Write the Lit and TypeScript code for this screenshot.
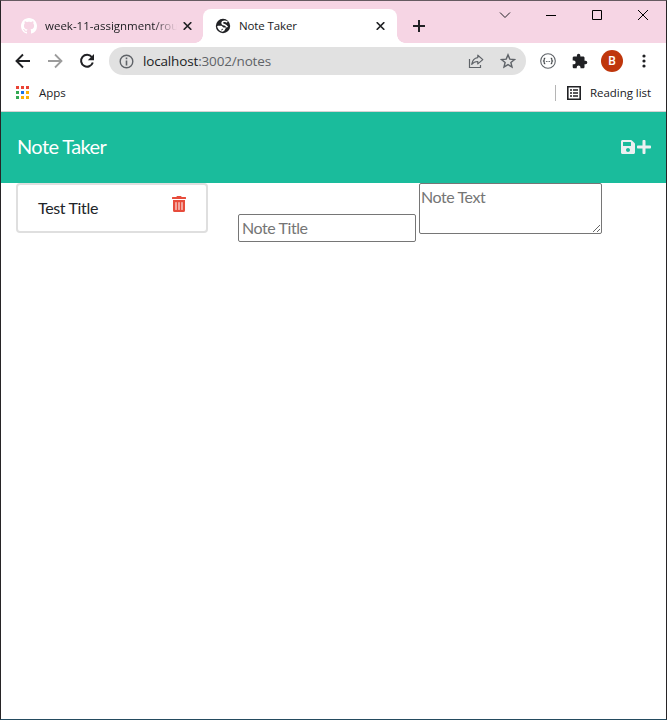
import { LitElement, html, css, svg } from "lit";
import { customElement } from "lit/decorators.js";

const GITHUB =
  "M8 0C3.58 0 0 3.58 0 8c0 3.54 2.29 6.53 5.47 7.59.4.07.55-.17.55-.38 0-.19-.01-.82-.01-1.49-2.01.37-2.53-.49-2.69-.94-.09-.23-.48-.94-.82-1.13-.28-.15-.68-.52-.01-.53.63-.01 1.08.58 1.23.82.72 1.21 1.87.87 2.33.66.07-.52.28-.87.51-1.07-1.78-.2-3.64-.89-3.64-3.95 0-.87.31-1.59.82-2.15-.08-.2-.36-1.02.08-2.12 0 0 .67-.21 2.2.82.64-.18 1.32-.27 2-.27s1.36.09 2 .27c1.53-1.04 2.2-.82 2.2-.82.44 1.1.16 1.92.08 2.12.51.56.82 1.27.82 2.15 0 3.07-1.87 3.75-3.65 3.95.29.25.54.73.54 1.48 0 1.07-.01 1.93-.01 2.2 0 .21.15.46.55.38A8.01 8.01 0 0 0 16 8c0-4.42-3.58-8-8-8z";
const PUZZLE =
  "M20.5 11H19V7c0-1.100-.9-2-2-2h-4V3.500a2.500 2.500 0 0 0-5 0V5H4c-1.100 0-2 .9-2 2v3.800h1.500a2.700 2.700 0 0 1 0 5.400H2V20c0 1.100.9 2 2 2h3.800v-1.500a2.700 2.700 0 0 1 5.400 0V22H17c1.100 0 2-.9 2-2v-4h1.500a2.500 2.500 0 0 0 0-5z";
const TRASH =
  "M32 464a48 48 0 0 0 48 48h288a48 48 0 0 0 48-48V128H32zm272-256a16 16 0 0 1 32 0v224a16 16 0 0 1-32 0zm-96 0a16 16 0 0 1 32 0v224a16 16 0 0 1-32 0zm-96 0a16 16 0 0 1 32 0v224a16 16 0 0 1-32 0zM432 32H312l-9.400-18.700A24 24 0 0 0 281.100 0H166.800a23.720 23.720 0 0 0-21.400 13.300L136 32H16A16 16 0 0 0 0 48v32a16 16 0 0 0 16 16h416a16 16 0 0 0 16-16V48a16 16 0 0 0-16-16z";
const SAVE =
  "M433.941 129.941l-83.882-83.882A48 48 0 0 0 316.118 32H48C21.490 32 0 53.490 0 80v352c0 26.510 21.490 48 48 48h352c26.510 0 48-21.490 48-48V163.882a48 48 0 0 0-14.059-33.941zM224 416c-35.346 0-64-28.654-64-64 0-35.346 28.654-64 64-64s64 28.654 64 64c0 35.346-28.654 64-64 64zm96-304.520V212c0 6.627-5.373 12-12 12H76c-6.627 0-12-5.373-12-12V108c0-6.627 5.373-12 12-12h228.520c3.183 0 6.235 1.264 8.485 3.515l3.480 3.480A11.996 11.996 0 0 1 320 111.480z";
const PLUS =
  "M416 208H272V64c0-17.670-14.330-32-32-32h-32c-17.670 0-32 14.330-32 32v144H32c-17.670 0-32 14.330-32 32v32c0 17.670 14.330 32 32 32h144v144c0 17.670 14.330 32 32 32h32c17.670 0 32-14.330 32-32V304h144c17.670 0 32-14.330 32-32v-32c0-17.670-14.330-32-32-32z";

const APP_COLORS = ["#ea4335", "#ea4335", "#ea4335", "#34a853", "#1a73e8", "#fbaf05", "#34a853", "#fbaf05", "#fbaf05"];

const closeIcon = html`<svg class="close" width="9" height="8" viewBox="0 0 9 8">
  <path d="M.7 .2l7.600 7.600M8.300 .2L.7 7.800" stroke="#202124" stroke-width="1.600" />
</svg>`;

@customElement("browser-tabs")
class BrowserTabs extends LitElement {
  static styles = css`
    :host { display: flex; height: 42px; background: #f6d5e4; font: 11.500px "Open Sans", sans-serif; color: #202124; }
    .tab { display: flex; align-items: center; height: 34px; margin-top: 8px; box-sizing: border-box; }
    .idle { width: 202px; padding-left: 20px; }
    .active { position: relative; width: 194px; padding-left: 12px; background: #fff; border-radius: 8px 8px 0 0; }
    .active::before, .active::after { content: ""; position: absolute; bottom: 0; width: 8px; height: 8px; }
    .active::before { left: -8px; background: radial-gradient(circle at 0 0, transparent 7.500px, #fff 8px); }
    .active::after { right: -8px; background: radial-gradient(circle at 100% 0, transparent 7.500px, #fff 8px); }
    .label { white-space: nowrap; line-height: 18px; }
    .idle .label { margin-left: 8px; width: 134px; letter-spacing: 0.010px; -webkit-mask-image: linear-gradient(90deg, #000 108px, transparent 132px); mask-image: linear-gradient(90deg, #000 108px, transparent 132px); }
    .active .label { margin-left: 8px; width: 137px; letter-spacing: -0.120px; }
    .idle .close { margin-left: 4px; }
    .plus { margin: 19px 0 0 16px; }
    .controls { display: flex; margin-left: auto; height: 28px; }
    .control { display: flex; width: 46px; align-items: center; justify-content: center; }
    svg { display: block; flex: none; }
  `;
  render() {
    return html`
      <div class="tab idle">
        <svg width="16" height="16" viewBox="0 0 16 16"><path fill="#fff" d=${GITHUB} /></svg>
        <span class="label">week-11-assignment/rou</span>${closeIcon}
      </div>
      <div class="tab active">
        <svg width="16" height="16" viewBox="0 0 16 16">
          <circle cx="8" cy="8" r="7.200" fill="#202124" />
          <path fill="none" stroke="#fff" stroke-width="1.700" d="M12.300 4.200C10.500 2.600 7.600 3.200 7.200 4.600C6.900 6 8.400 6.500 9.600 6.800C11.200 7.300 11.800 8.400 12.300 9.200M2.700 8.600H6.200L8.200 10.300H9.800C9.300 12 8 13 6.600 13.200" />
          <path fill="#fff" d="M2.300 8H6L7.500 9.700 6.500 11.400V13.400C4.200 12.900 2.400 10.800 2.300 8z" />
        </svg>
        <span class="label">Note Taker</span>${closeIcon}
      </div>
      <svg class="plus" width="12" height="12" viewBox="0 0 12 12"><path d="M6 0v12M0 6h12" stroke="#202124" stroke-width="2" /></svg>
      <div class="controls">
        <span class="control"><svg width="12" height="8" viewBox="0 0 12 8"><path d="M1 1.500l5 5 5-5" fill="none" stroke="#202124" /></svg></span>
        <span class="control"><svg width="10" height="10" viewBox="0 0 10 10"><path d="M0 5.500h10" stroke="#000" /></svg></span>
        <span class="control"><svg width="10" height="10" viewBox="0 0 10 10"><path d="M.5 .5h9v9h-9z" fill="none" stroke="#000" /></svg></span>
        <span class="control"><svg width="10" height="10" viewBox="0 0 10 10"><path d="M0 0l10 10M10 0L0 10" stroke="#000" /></svg></span>
      </div>
    `;
  }
}

@customElement("browser-toolbar")
class BrowserToolbar extends LitElement {
  static styles = css`
    :host { display: flex; align-items: center; height: 36px; padding-left: 6px; background: #fff; }
    .cell { display: flex; width: 32px; align-items: center; justify-content: center; flex: none; }
    .address { display: flex; align-items: center; width: 417px; height: 28px; margin: 0 6px; box-sizing: border-box; padding: 0 2px 0 10px; border-radius: 14px; background: #e1e1e1; }
    .url { margin-left: 9px; flex: 1; font: 13.500px "Open Sans", sans-serif; color: #5f6368; letter-spacing: -0.160px; }
    .host { color: #202124; }
    .avatar { width: 22px; height: 22px; border-radius: 50%; background: #bf360c; color: #fff; font: 500 12px/22px Roboto, sans-serif; text-align: center; }
    svg { display: block; flex: none; }
  `;
  render() {
    return html`
      <span class="cell"><svg width="16" height="16" viewBox="0 0 16 16"><path d="M15 8H2M8 1.500L1.500 8 8 14.500" fill="none" stroke="#202124" stroke-width="1.900" /></svg></span>
      <span class="cell"><svg width="16" height="16" viewBox="0 0 16 16"><path d="M1 8h13M8 1.500L14.500 8 8 14.500" fill="none" stroke="#9c9c9c" stroke-width="1.800" /></svg></span>
      <span class="cell"><svg width="16" height="16" viewBox="0 0 16 16"><path d="M12.800 4A6 6 0 1 0 13.800 9.500" fill="none" stroke="#202124" stroke-width="2" /><path d="M15 1v6.200H8.800z" fill="#202124" /></svg></span>
      <div class="address">
        <svg width="15" height="15" viewBox="0 0 15 15"><circle cx="7.500" cy="7.500" r="6.300" fill="none" stroke="#5f6368" stroke-width="1.400" /><path d="M7.500 3.500v1.700M7.500 6.500v5" stroke="#5f6368" stroke-width="1.600" /></svg>
        <span class="url"><span class="host">localhost</span>:3002/notes</span>
        <span class="cell"><svg width="16" height="16" viewBox="0 0 16 16"><path d="M1.500 6v8.500h11V12" fill="none" stroke="#5f6368" stroke-width="1.200" /><path d="M9.800 2.200l5 4.400-5 4.300V8.500C7 8.400 5.200 9.500 3.700 11.400 4.300 7.500 6.200 5 9.800 4.600z" fill="none" stroke="#5f6368" stroke-width="1.200" stroke-linejoin="round" /></svg></span>
        <span class="cell"><svg width="16" height="16" viewBox="0 0 16 16"><path d="M8 1.900l1.800 4.200 4.700.4-3.600 3 1.100 4.500L8 11.600 4 14l1.100-4.500-3.600-3 4.700-.4z" fill="none" stroke="#5f6368" stroke-width="1.400" /></svg></span>
      </div>
      <span class="cell"><svg width="16" height="16" viewBox="0 0 16 16"><circle cx="8" cy="8" r="7.300" fill="none" stroke="#5f6368" stroke-width="1.100" /><path d="M5.300 5.200H4.700Q4.200 5.200 4.200 6v1.300L3.400 8l.8.7V10q0 .8.5.8h.6M10.700 5.200h.6q.5 0 .5.8v1.300l.8.7-.8.7V10q0 .8-.5.8h-.6" fill="none" stroke="#3c4043" stroke-width="1.100" /><path d="M5.900 8.500h1M7.500 8.500h1M9.100 8.500h1" stroke="#5f6368" /></svg></span>
      <span class="cell"><svg width="16" height="16" viewBox="1 0 23 23"><path d=${PUZZLE} fill="#202124" /></svg></span>
      <span class="cell"><span class="avatar">B</span></span>
      <span class="cell"><svg width="4" height="14" viewBox="0 0 4 14"><g fill="#202124"><circle cx="2" cy="2" r="1.600" /><circle cx="2" cy="7" r="1.600" /><circle cx="2" cy="12" r="1.600" /></g></svg></span>
    `;
  }
}

@customElement("bookmarks-bar")
class BookmarksBar extends LitElement {
  static styles = css`
    :host { display: flex; align-items: center; box-sizing: border-box; padding: 0 14px 4px 15px; background: #fff; border-bottom: 1px solid #d5d2d3; height: 33px; font: 11.500px/16px "Open Sans", sans-serif; color: #202124; }
    .grid { margin-bottom: 1px; }
    .apps { margin-left: 10px; }
    .divider { width: 1px; height: 16px; margin: 0 11px 0 auto; background: #b5b5b5; }
    .reading { width: 62px; margin-left: 9px; white-space: nowrap; letter-spacing: -0.040px; }
    svg { display: block; flex: none; }
  `;
  render() {
    return html`
      <svg class="grid" width="13" height="13" viewBox="0 0 13 13">
        ${APP_COLORS.map((c, i) => svg`<rect x=${(i % 3) * 5} y=${Math.floor(i / 3) * 5} width="3" height="3" fill=${c} />`)}
      </svg>
      <span class="apps">Apps</span>
      <span class="divider"></span>
      <svg width="14" height="14" viewBox="0 0 14 14"><path d="M.8 .8h12.400v12.400H.8z" fill="none" stroke="#202124" stroke-width="1.600" /><path d="M3 4h2M3 7h2M3 10h2M6 4h5M6 7h5M6 10h5" stroke="#202124" stroke-width="1.400" /></svg>
      <span class="reading">Reading list</span>
    `;
  }
}

@customElement("note-taker")
class NoteTaker extends LitElement {
  static styles = css`
    :host { display: block; flex: 1; background: #fff; font: 16px/24px Lato, sans-serif; }
    .header { display: flex; align-items: center; height: 71px; box-sizing: border-box; padding: 0 15px 2px 16px; background: #1abc9c; color: #fff; font-size: 20px; }
    .title { letter-spacing: -0.600px; padding-bottom: 2px; }
    .actions { display: flex; margin-left: auto; gap: 2px; }
    .notes { display: flex; align-items: flex-start; padding-left: 15px; }
    .card { display: flex; justify-content: space-between; width: 192px; height: 50px; box-sizing: border-box; padding: 11px 20px 0; border: 2px solid #dfdfdf; border-radius: 4px; color: #212529; letter-spacing: -0.340px; }
    input, textarea { box-sizing: border-box; border: 1px solid #767676; border-radius: 2px; margin: 0; font: 16px/24px Lato, sans-serif; letter-spacing: -0.430px; background: #fff; }
    input { width: 178px; height: 28px; margin: 31px 0 0 30px; padding: 0 3px 1px; }
    textarea { width: 183px; height: 51px; margin-left: 3px; padding: 1px; overflow: hidden; }
    ::placeholder { color: #757575; opacity: 1; }
    svg { display: block; flex: none; }
  `;
  render() {
    return html`
      <div class="header">
        <span class="title">Note Taker</span>
        <span class="actions">
          <svg width="14" height="16" viewBox="0 0 448 512"><path fill="#ecf0f1" d=${SAVE} /></svg>
          <svg width="14" height="16" viewBox="0 0 448 512"><path fill="#ecf0f1" d=${PLUS} /></svg>
        </span>
      </div>
      <div class="notes">
        <div class="card">
          <span>Test Title</span>
          <svg width="14" height="16" viewBox="0 0 448 512"><path fill="#e74c3c" d=${TRASH} /></svg>
        </div>
        <input placeholder="Note Title" />
        <textarea placeholder="Note Text"></textarea>
      </div>
    `;
  }
}

@customElement("app-root")
class AppRoot extends LitElement {
  static styles = css`
    :host { display: flex; flex-direction: column; width: 667px; height: 720px; box-sizing: border-box; overflow: hidden; border: 1px solid #272426; border-top-color: #665b61; border-bottom-color: #244b60; background: #fff; }
  `;
  render() {
    return html`<browser-tabs></browser-tabs><browser-toolbar></browser-toolbar><bookmarks-bar></bookmarks-bar><note-taker></note-taker>`;
  }
}
